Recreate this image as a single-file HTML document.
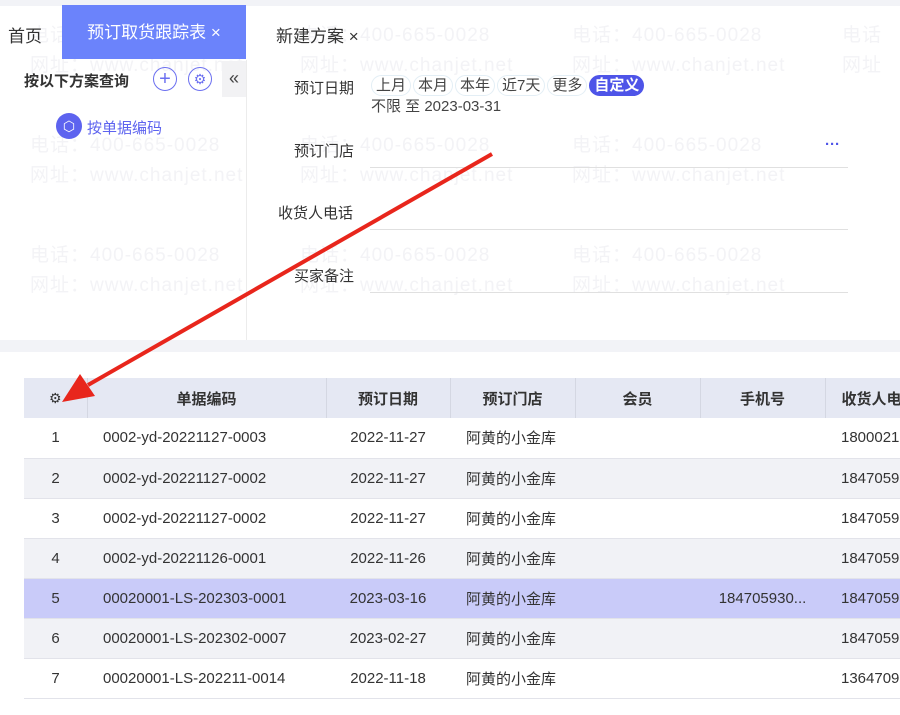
<html><head><style>
body{margin:0;width:900px;height:715px;overflow:hidden;background:#fff;font-family:"Liberation Sans","Noto Sans CJK SC",sans-serif;color:#333;position:relative}
.a{position:absolute}
.wm{position:absolute;color:#f3f3f6;font-size:19px;white-space:nowrap;letter-spacing:1px}
.pill{display:inline-block;border:1px solid #e3eef5;border-radius:11px;padding:0 4px;font-size:15px;line-height:19px;margin-right:2px;color:#444}
.line{position:absolute;height:1px;background:#e0e0e0}
table{border-collapse:collapse;position:absolute;left:24px;top:378px;font-size:15px;table-layout:fixed;width:876px}
td,th{padding:0;text-align:center;color:#333;overflow:hidden;white-space:nowrap}
td{height:40px}
th{height:40px;background:#e5e8f3;font-weight:bold;border-right:1px solid #d4d7e2}
tr.g td{background:#f1f2f6}
tr.h td{background:#c9cbf9}
td.l{text-align:left;padding-left:16px}
td{border-bottom:1px solid #e2e3ea}
</style></head><body>
<div class="a" style="left:0;top:0;width:900px;height:6px;background:#f2f3f7"></div>
<div class="wm" style="left:30px;top:20px">电话：400-665-0028</div><div class="wm" style="left:30px;top:50px">网址：www.chanjet.net</div>
<div class="wm" style="left:300px;top:20px">电话：400-665-0028</div><div class="wm" style="left:300px;top:50px">网址：www.chanjet.net</div>
<div class="wm" style="left:572px;top:20px">电话：400-665-0028</div><div class="wm" style="left:572px;top:50px">网址：www.chanjet.net</div>
<div class="wm" style="left:842px;top:20px">电话</div><div class="wm" style="left:842px;top:50px">网址</div>
<div class="wm" style="left:30px;top:130px">电话：400-665-0028</div><div class="wm" style="left:30px;top:160px">网址：www.chanjet.net</div>
<div class="wm" style="left:300px;top:130px">电话：400-665-0028</div><div class="wm" style="left:300px;top:160px">网址：www.chanjet.net</div>
<div class="wm" style="left:572px;top:130px">电话：400-665-0028</div><div class="wm" style="left:572px;top:160px">网址：www.chanjet.net</div>
<div class="wm" style="left:30px;top:240px">电话：400-665-0028</div><div class="wm" style="left:30px;top:270px">网址：www.chanjet.net</div>
<div class="wm" style="left:300px;top:240px">电话：400-665-0028</div><div class="wm" style="left:300px;top:270px">网址：www.chanjet.net</div>
<div class="wm" style="left:572px;top:240px">电话：400-665-0028</div><div class="wm" style="left:572px;top:270px">网址：www.chanjet.net</div>
<div class="a" style="left:8px;top:22px;font-size:17px">首页</div>
<div class="a" style="left:62px;top:5px;width:184px;height:54px;background:#6b83fb;color:#fff;font-size:17px;line-height:56px;text-align:center">预订取货跟踪表 ×</div>
<div class="a" style="left:276px;top:22px;font-size:17px">新建方案 ×</div>
<div class="a" style="left:246px;top:60px;width:1px;height:280px;background:#ececec"></div>
<div class="a" style="left:24px;top:70px;font-size:15px;font-weight:bold">按以下方案查询</div>
<div class="a" style="left:153px;top:67px;width:22px;height:22px;border:1.5px solid #6b6ff0;border-radius:50%;color:#6b6ff0;text-align:center;line-height:22px;font-size:20px">+</div>
<div class="a" style="left:188px;top:67px;width:22px;height:22px;border:1.5px solid #6b6ff0;border-radius:50%;color:#6b6ff0;text-align:center;line-height:22px;font-size:14px">⚙</div>
<div class="a" style="left:222px;top:61px;width:24px;height:36px;background:#f2f2f4;color:#444;font-size:18px;text-align:center;line-height:34px">«</div>
<div class="a" style="left:56px;top:113px;width:26px;height:26px;border-radius:50%;background:#5d63ef;color:#fff;text-align:center;line-height:26px;font-size:14px">⬡</div>
<div class="a" style="left:87px;top:117px;font-size:15px;color:#5d63ef">按单据编码</div>
<div class="a" style="left:294px;top:77px;font-size:15px">预订日期</div>
<div class="a" style="left:371px;top:75px;white-space:nowrap"><span class="pill">上月</span><span class="pill">本月</span><span class="pill">本年</span><span class="pill">近7天</span><span class="pill">更多</span><span class="pill" style="background:#4e54e8;color:#fff;border-color:#4e54e8;font-weight:bold">自定义</span></div>
<div class="a" style="left:371px;top:95px;font-size:15px;color:#444">不限 至 2023-03-31</div>
<div class="a" style="left:294px;top:140px;font-size:15px">预订门店</div>
<div class="a" style="left:825px;top:136px;font-size:15px;color:#4e54e8;font-weight:bold">···</div>
<div class="line" style="left:370px;top:167px;width:478px"></div>
<div class="a" style="left:278px;top:202px;font-size:15px">收货人电话</div>
<div class="line" style="left:370px;top:229px;width:478px"></div>
<div class="a" style="left:294px;top:265px;font-size:15px">买家备注</div>
<div class="line" style="left:370px;top:292px;width:478px"></div>
<div class="a" style="left:0;top:340px;width:900px;height:12px;background:#f2f3f7"></div>
<table>
<colgroup><col style="width:63px"><col style="width:239px"><col style="width:124px"><col style="width:125px"><col style="width:125px"><col style="width:125px"><col style="width:75px"></colgroup>
<tr><th style="font-weight:normal;font-size:14px">⚙</th><th>单据编码</th><th>预订日期</th><th>预订门店</th><th>会员</th><th>手机号</th><th style="text-align:left;padding-left:16px;border:0">收货人电</th></tr>
<tr><td>1</td><td class="l">0002-yd-20221127-0003</td><td>2022-11-27</td><td class="l">阿黄的小金库</td><td></td><td></td><td class="l">1800021</td></tr>
<tr class="g"><td>2</td><td class="l">0002-yd-20221127-0002</td><td>2022-11-27</td><td class="l">阿黄的小金库</td><td></td><td></td><td class="l">1847059</td></tr>
<tr><td>3</td><td class="l">0002-yd-20221127-0002</td><td>2022-11-27</td><td class="l">阿黄的小金库</td><td></td><td></td><td class="l">1847059</td></tr>
<tr class="g"><td>4</td><td class="l">0002-yd-20221126-0001</td><td>2022-11-26</td><td class="l">阿黄的小金库</td><td></td><td></td><td class="l">1847059</td></tr>
<tr class="h"><td>5</td><td class="l">00020001-LS-202303-0001</td><td>2023-03-16</td><td class="l">阿黄的小金库</td><td></td><td>184705930...</td><td class="l">1847059</td></tr>
<tr class="g"><td>6</td><td class="l">00020001-LS-202302-0007</td><td>2023-02-27</td><td class="l">阿黄的小金库</td><td></td><td></td><td class="l">1847059</td></tr>
<tr><td>7</td><td class="l">00020001-LS-202211-0014</td><td>2022-11-18</td><td class="l">阿黄的小金库</td><td></td><td></td><td class="l">1364709</td></tr>
</table>
<svg class="a" style="left:0;top:0" width="900" height="715"><line x1="492" y1="154" x2="88" y2="385" stroke="#e8261c" stroke-width="4"/><polygon points="62,402 80,374 95,396" fill="#e8261c"/></svg>
</body></html>
